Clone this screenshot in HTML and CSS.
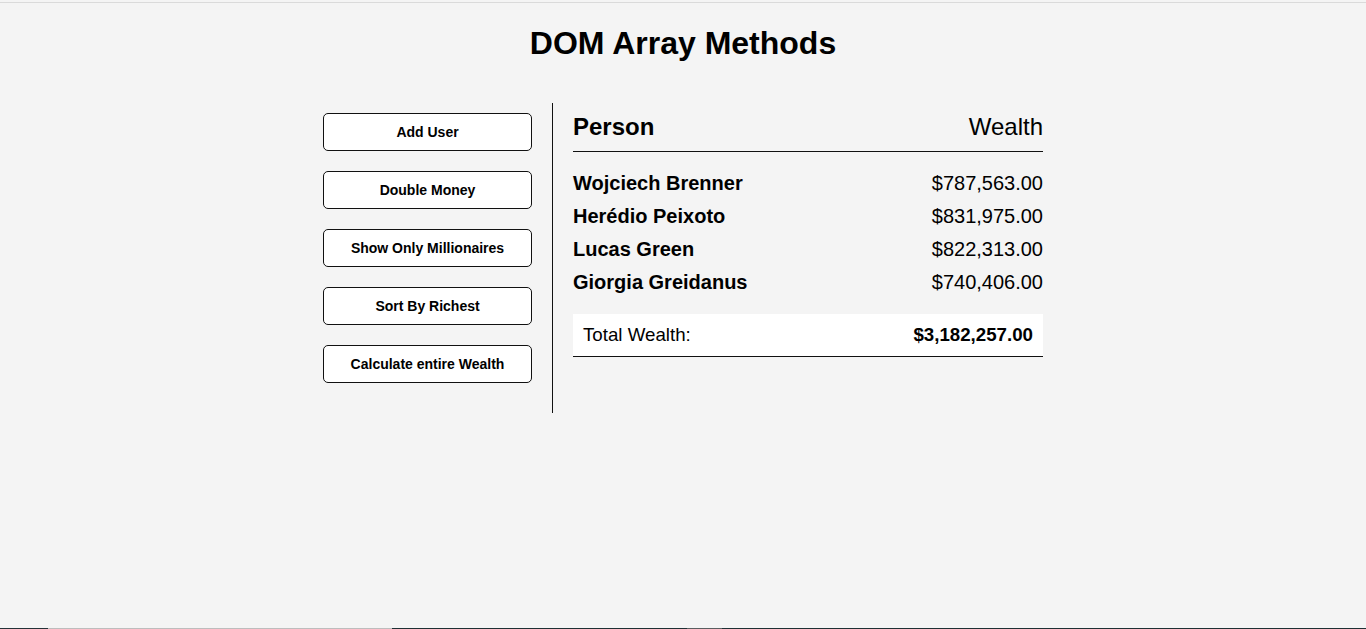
FILE: index.html
```html
<!DOCTYPE html>
<html lang="en">
<head>
<meta charset="UTF-8">
<title>DOM Array Methods</title>
<link rel="stylesheet" href="styles.css">
</head>
<body>
<div class="topline"></div>
<h1 class="title">DOM Array Methods</h1>
<div class="container">
  <aside class="sidebar">
    <button class="btn">Add User</button>
    <button class="btn">Double Money</button>
    <button class="btn">Show Only Millionaires</button>
    <button class="btn">Sort By Richest</button>
    <button class="btn">Calculate entire Wealth</button>
  </aside>
  <main class="main">
    <h2 class="head"><strong class="b">Person</strong> Wealth</h2>
    <div class="person"><strong class="b">Wojciech Brenner</strong> $787,563.00</div>
    <div class="person"><strong class="b">Herédio Peixoto</strong> $831,975.00</div>
    <div class="person"><strong class="b">Lucas Green</strong> $822,313.00</div>
    <div class="person"><strong class="b">Giorgia Greidanus</strong> $740,406.00</div>
    <h3 class="total">Total Wealth: <strong class="b">$3,182,257.00</strong></h3>
  </main>
</div>
<div class="taskbar"></div>
</body>
</html>
```

FILE: styles.css
```css
* { box-sizing: border-box; }

body {
  margin: 0;
  padding-top: 2px;
  background: #f4f4f4;
  font-family: "Liberation Sans", Arial, sans-serif;
  color: #000;
  display: flex;
  flex-direction: column;
  align-items: center;
  min-height: 100vh;
}

.topline {
  align-self: stretch;
  height: 1px;
  background: #dadada;
}

.title {
  font-size: 32px;
  margin: 22px 0 21px;
  font-weight: bold;
}

.container {
  display: flex;
  padding: 20px;
  width: 800px;
  margin: 0 auto;
}

.sidebar {
  width: 250px;
  padding: 10px 20px;
  border-right: 1px solid #111;
}

.btn {
  display: block;
  width: 100%;
  background: #fff;
  border: 1px solid #111;
  border-radius: 5px;
  padding: 10px;
  margin-bottom: 20px;
  font-family: "Liberation Sans", Arial, sans-serif;
  font-size: 14px;
  font-weight: 800;
  color: #000;
  cursor: pointer;
  line-height: 16px;
}

.main {
  flex: 1;
  padding: 10px 20px;
}

.b { font-weight: bold; }

.head {
  display: flex;
  justify-content: space-between;
  font-size: 24px;
  font-weight: 300;
  border-bottom: 1px solid #111;
  padding-bottom: 10px;
  margin: 0 0 20px;
}

.person {
  display: flex;
  justify-content: space-between;
  font-size: 20px;
  margin-bottom: 10px;
}

.total {
  display: flex;
  justify-content: space-between;
  background: #fff;
  border-bottom: 1px solid #111;
  padding: 10px;
  font-size: 18.72px;
  font-weight: 300;
  margin: 20px 0 0;
}

.taskbar {
  position: fixed;
  left: 0;
  right: 0;
  bottom: 0;
  height: 1px;
  background: linear-gradient(to right, #243238 0, #243238 48px, #bdbdbd 48px, #bdbdbd 392px, #1e3034 392px, #1e3034 687px, #5a5e60 687px, #5a5e60 722px, #1e3034 722px);
}
```
